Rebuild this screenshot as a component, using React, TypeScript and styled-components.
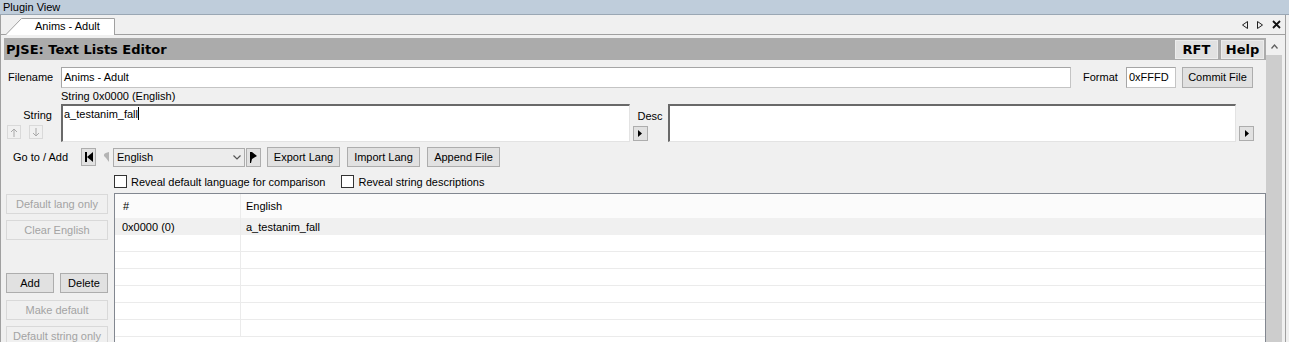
import React from 'react';
import styled, { createGlobalStyle } from 'styled-components';

const GlobalStyle = createGlobalStyle`
  html, body { margin: 0; padding: 0; background: #f0f0f0; }
  body {
    font-family: "Liberation Sans", Arial, sans-serif;
    font-size: 11px;
    color: #000;
    overflow: hidden;
  }
`;

const Frame = styled.div`
  width: 1289px;
  height: 342px;
  display: flex;
  flex-direction: column;
  overflow: hidden;
  background: #f0f0f0;
`;

const TitleBar = styled.div`
  flex-shrink: 0;
  height: 14px;
  line-height: 14px;
  padding-left: 3px;
  background: #bfcddb;
  border-bottom: 1px solid #9aa7b4;
`;

const Pane = styled.div`
  flex: 1;
  display: flex;
  flex-direction: column;
  margin-right: 3px;
  border-left: 1px solid #a0a0a0;
  border-right: 1px solid #a0a0a0;
  min-height: 0;
  overflow: hidden;
`;

const TabStrip = styled.div`
  flex-shrink: 0;
  height: 19px;
  display: flex;
  align-items: flex-end;
  padding-left: 4px;
  border-bottom: 1px solid #a0a0a0;
`;

const Tab = styled.div`
  position: relative;
  height: 17px;
  width: 110px;
  margin-bottom: -1px;
  box-sizing: border-box;
  padding-left: 30px;
  line-height: 17px;
  z-index: 1;
  span { position: relative; }
  svg { position: absolute; left: 0; top: 0; }
`;

const StripTools = styled.div`
  margin-left: auto;
  display: flex;
  align-items: center;
  gap: 9px;
  height: 19px;
  margin-right: 4px;
  align-self: flex-start;
`;

const Body = styled.div`
  flex: 1;
  display: flex;
  padding-left: 3px;
  min-height: 0;
  overflow: hidden;
`;

const Main = styled.div`
  flex: 1;
  display: flex;
  flex-direction: column;
  padding-top: 3px;
  min-width: 0;
`;

const HeaderBar = styled.div`
  flex-shrink: 0;
  height: 22px;
  display: flex;
  align-items: center;
  background: #ababab;
  padding: 0 2px;
`;

const HeaderTitle = styled.div`
  font-family: "DejaVu Sans", Verdana, sans-serif;
  font-weight: bold;
  font-size: 13px;
  flex: 1;
`;

const HeaderButton = styled.div`
  height: 19px;
  width: 43px;
  box-sizing: border-box;
  margin-left: 3px;
  background: #e1e1e1;
  border: 1px solid #ececec;
  display: flex;
  align-items: center;
  justify-content: center;
  font-family: "DejaVu Sans", Verdana, sans-serif;
  font-weight: bold;
  font-size: 13px;
`;

const ScrollCol = styled.div`
  width: 16px;
  flex-shrink: 0;
  margin-top: 3px;
  margin-right: 3px;
  display: flex;
  flex-direction: column;
`;

const ScrollArrow = styled.div`
  height: 17px;
  flex-shrink: 0;
  display: flex;
  align-items: center;
  justify-content: center;
`;

const ScrollTrack = styled.div`
  flex: 1;
  background: #cdcdcd;
`;

const Form = styled.div`
  display: flex;
  flex-direction: column;
  padding: 6px 0 0 2px;
  flex-shrink: 0;
`;

const Row = styled.div<{ $h: number; $mt?: number }>`
  flex-shrink: 0;
  display: flex;
  align-items: center;
  height: ${p => p.$h}px;
  margin-top: ${p => p.$mt ?? 0}px;
  margin-right: 12px;
`;

const LabelCol = styled.div<{ $w: number; $pl?: number }>`
  width: ${p => p.$w}px;
  padding-left: ${p => p.$pl ?? 0}px;
  box-sizing: border-box;
  flex-shrink: 0;
  white-space: nowrap;
`;

const TextInput = styled.div<{ $w?: number }>`
  box-sizing: border-box;
  height: 21px;
  ${p => (p.$w ? `width: ${p.$w}px; flex-shrink: 0;` : 'flex: 1;')}
  background: #fff;
  border: 1px solid #c4c4c4;
  border-top-color: #a5a5a5;
  border-left-color: #a5a5a5;
  padding: 0 2px;
  line-height: 19px;
  white-space: nowrap;
`;

const Button = styled.div<{ $w?: number; $h?: number; $off?: boolean }>`
  box-sizing: border-box;
  flex-shrink: 0;
  ${p => (p.$w ? `width: ${p.$w}px;` : '')}
  height: ${p => p.$h ?? 20}px;
  background: ${p => (p.$off ? '#f0f0f0' : '#e1e1e1')};
  border: 1px solid ${p => (p.$off ? '#d9d9d9' : '#adadad')};
  color: ${p => (p.$off ? '#a3a3a3' : '#000')};
  display: flex;
  align-items: center;
  justify-content: center;
  white-space: nowrap;
`;

const SubLabel = styled.div`
  flex-shrink: 0;
  height: 15px;
  line-height: 14px;
  padding-left: 55px;
  margin-top: 1px;
`;

const StringRow = styled.div`
  flex-shrink: 0;
  display: flex;
  height: 38px;
  margin-right: 12px;
`;

const StringLabelCol = styled.div`
  width: 55px;
  flex-shrink: 0;
  display: flex;
  flex-direction: column;
`;

const StringLabel = styled.div`
  text-align: right;
  padding-right: 9px;
  padding-top: 4px;
  line-height: 14px;
`;

const ArrowPair = styled.div`
  margin-top: auto;
  margin-bottom: 3px;
  display: flex;
  gap: 8px;
  padding-left: 1px;
`;

const TextBox = styled.div`
  flex: 1;
  box-sizing: border-box;
  background: #fff;
  border: 1px solid #e3e3e3;
  border-top: 2px solid #696969;
  border-left: 2px solid #696969;
  padding: 1px 1px;
  line-height: 14px;
`;

const Caret = styled.span`
  display: inline-block;
  width: 1px;
  height: 13px;
  background: #000;
  vertical-align: -2px;
`;

const DescCol = styled.div`
  width: 38px;
  flex-shrink: 0;
  display: flex;
  flex-direction: column;
  padding-left: 3px;
  box-sizing: border-box;
`;

const DescLabel = styled.div`
  padding-left: 5px;
  padding-top: 5px;
  line-height: 14px;
`;

const ExpandSlot = styled.div`
  margin-top: auto;
  margin-bottom: 1px;
`;

const ExpandCol = styled.div`
  width: 18px;
  flex-shrink: 0;
  display: flex;
  flex-direction: column;
  padding-left: 3px;
  box-sizing: border-box;
`;

const GotoLabel = styled.div`
  width: 75px;
  padding-left: 7px;
  box-sizing: border-box;
  flex-shrink: 0;
`;

const Select = styled.div`
  box-sizing: border-box;
  width: 132px;
  height: 19px;
  flex-shrink: 0;
  background: #ececec;
  border: 1px solid #acacac;
  display: flex;
  align-items: center;
  padding: 0 3px;
  justify-content: space-between;
`;

const CheckRow = styled.div`
  flex-shrink: 0;
  display: flex;
  align-items: center;
  height: 13px;
  margin-top: 8px;
  padding-left: 108px;
`;

const CheckBox = styled.span`
  width: 13px;
  height: 13px;
  box-sizing: border-box;
  border: 1px solid #333;
  background: #fff;
  margin-right: 4px;
  flex-shrink: 0;
`;

const CheckLabel = styled.span<{ $mr?: number }>`
  margin-right: ${p => p.$mr ?? 0}px;
`;

const Lower = styled.div`
  flex-shrink: 0;
  display: flex;
  margin-top: 5px;
  gap: 6px;
`;

const SideButtons = styled.div`
  width: 102px;
  flex-shrink: 0;
  display: flex;
  flex-direction: column;
  padding-top: 1px;
`;

const SidePair = styled.div`
  display: flex;
  justify-content: space-between;
`;

const Table = styled.div`
  flex: 1;
  background: #fff;
  border: 1px solid #828790;
  border-bottom: none;
  height: 200px;
`;

const TRow = styled.div<{ $head?: boolean; $sel?: boolean }>`
  display: grid;
  grid-template-columns: 126px 1fr;
  height: ${p => (p.$head ? 24 : p.$sel ? 17 : 16)}px;
  background: ${p => (p.$head ? '#fbfbfb' : p.$sel ? '#f0f0f0' : '#fff')};
  border-bottom: ${p => (p.$head || p.$sel ? 'none' : '1px solid #ebebeb')};
`;

const TCell = styled.div<{ $first?: boolean; $pl?: number }>`
  display: flex;
  align-items: center;
  padding-left: ${p => p.$pl ?? (p.$first ? 7 : 5)}px;
  border-right: ${p => (p.$first ? '1px solid #ebebeb' : 'none')};
  white-space: nowrap;
`;

const Tri = ({ dir, color = '#000', w = 4, h = 7 }: { dir: 'l' | 'r'; color?: string; w?: number; h?: number }) => (
  <svg width={w} height={h} viewBox={`0 0 ${w} ${h}`}>
    {dir === 'r' ? (
      <polygon points={`0,0 ${w},${h / 2} 0,${h}`} fill={color} />
    ) : (
      <polygon points={`${w},0 0,${h / 2} ${w},${h}`} fill={color} />
    )}
  </svg>
);

const Expand = () => (
  <Button $w={15} $h={15}>
    <Tri dir="r" />
  </Button>
);

const ArrowBtn = ({ up }: { up?: boolean }) => (
  <Button $w={14} $h={14} $off>
    <svg width="8" height="9" viewBox="0 0 8 9">
      {up ? (
        <path d="M4 1 V9 M1 4 L4 1 L7 4" stroke="#a8a8a8" strokeWidth="1" fill="none" />
      ) : (
        <path d="M4 0 V8 M1 5 L4 8 L7 5" stroke="#a8a8a8" strokeWidth="1" fill="none" />
      )}
    </svg>
  </Button>
);

const rows = Array.from({ length: 6 });

export default function App() {
  return (
    <Frame>
      <GlobalStyle />
      <TitleBar>Plugin View</TitleBar>
      <Pane>
        <TabStrip>
          <Tab>
            <svg width="110" height="17" viewBox="0 0 110 17">
              <path d="M0.5 17 L16.5 0.5 L109.5 0.5 L109.5 17" fill="#fff" stroke="#a0a0a0" />
            </svg>
            <span>Anims - Adult</span>
          </Tab>
          <StripTools>
            <svg width="6" height="8" viewBox="0 0 6 8">
              <polygon points="5.5,0.5 0.5,4 5.5,7.5" fill="none" stroke="#222" />
            </svg>
            <svg width="6" height="8" viewBox="0 0 6 8">
              <polygon points="0.5,0.5 5.5,4 0.5,7.5" fill="none" stroke="#222" />
            </svg>
            <svg width="9" height="9" viewBox="0 0 9 9">
              <path d="M1 1 L8 8 M8 1 L1 8" stroke="#111" strokeWidth="1.8" />
            </svg>
          </StripTools>
        </TabStrip>
        <Body>
          <Main>
            <HeaderBar>
              <HeaderTitle>PJSE: Text Lists Editor</HeaderTitle>
              <HeaderButton>RFT</HeaderButton>
              <HeaderButton>Help</HeaderButton>
            </HeaderBar>
            <Form>
              <Row $h={22}>
                <LabelCol $w={55} $pl={2}>Filename</LabelCol>
                <TextInput>Anims - Adult</TextInput>
                <LabelCol $w={55} $pl={12}>Format</LabelCol>
                <TextInput $w={50}>0xFFFD</TextInput>
                <Button $w={71} $h={21} style={{ marginLeft: 6, marginRight: 1 }}>Commit File</Button>
              </Row>
              <SubLabel>String 0x0000 (English)</SubLabel>
              <StringRow>
                <StringLabelCol>
                  <StringLabel>String</StringLabel>
                  <ArrowPair>
                    <ArrowBtn up />
                    <ArrowBtn />
                  </ArrowPair>
                </StringLabelCol>
                <TextBox>
                  a_testanim_fall<Caret />
                </TextBox>
                <DescCol>
                  <DescLabel>Desc</DescLabel>
                  <ExpandSlot>
                    <Expand />
                  </ExpandSlot>
                </DescCol>
                <TextBox />
                <ExpandCol>
                  <ExpandSlot>
                    <Expand />
                  </ExpandSlot>
                </ExpandCol>
              </StringRow>
              <Row $h={20} $mt={5}>
                <GotoLabel>Go to / Add</GotoLabel>
                <Button $w={15} $h={18}>
                  <svg width="8" height="10" viewBox="0 0 8 10">
                    <rect x="0" y="0" width="2" height="10" fill="#000" />
                    <polygon points="8,0 2,5 8,10" fill="#000" />
                  </svg>
                </Button>
                <Button $w={15} $h={18} $off style={{ marginLeft: 2, border: 'none' }}>
                  <svg width="6" height="10" viewBox="0 0 6 10">
                    <path d="M6 0 L6 10 L3 6 L1 4 Q0 1 6 0 Z" fill="#b4b4b4" />
                  </svg>
                </Button>
                <Select>
                  <span>English</span>
                  <svg width="8" height="5" viewBox="0 0 8 5">
                    <path d="M0.5 0.5 L4 4 L7.5 0.5" fill="none" stroke="#555" strokeWidth="1.2" />
                  </svg>
                </Select>
                <Button $w={15} $h={19} style={{ marginLeft: 1 }}>
                  <svg width="7" height="11" viewBox="0 0 7 11">
                    <polygon points="0,0 2,0 7,4 2,7 1,11 0,11" fill="#000" />
                  </svg>
                </Button>
                <Button $w={73} $h={20} style={{ marginLeft: 6 }}>Export Lang</Button>
                <Button $w={73} $h={20} style={{ marginLeft: 7 }}>Import Lang</Button>
                <Button $w={73} $h={20} style={{ marginLeft: 7 }}>Append File</Button>
              </Row>
              <CheckRow>
                <CheckBox />
                <CheckLabel $mr={16}>Reveal default language for comparison</CheckLabel>
                <CheckBox />
                <CheckLabel>Reveal string descriptions</CheckLabel>
              </CheckRow>
              <Lower>
                <SideButtons>
                  <Button $off>Default lang only</Button>
                  <Button $off style={{ marginTop: 6 }}>Clear English</Button>
                  <SidePair style={{ marginTop: 33 }}>
                    <Button $w={48} $h={20}>Add</Button>
                    <Button $w={48} $h={20}>Delete</Button>
                  </SidePair>
                  <Button $off style={{ marginTop: 7 }}>Make default</Button>
                  <Button $off style={{ marginTop: 6 }}>Default string only</Button>
                </SideButtons>
                <Table>
                  <TRow $head>
                    <TCell $first $pl={8}>#</TCell>
                    <TCell>English</TCell>
                  </TRow>
                  <TRow $sel>
                    <TCell $first>0x0000 (0)</TCell>
                    <TCell>a_testanim_fall</TCell>
                  </TRow>
                  {rows.map((_, i) => (
                    <TRow key={i}>
                      <TCell $first />
                      <TCell />
                    </TRow>
                  ))}
                </Table>
              </Lower>
            </Form>
          </Main>
          <ScrollCol>
            <ScrollArrow>
              <svg width="7" height="5" viewBox="0 0 7 5">
                <path d="M0.5 4.5 L3.5 1 L6.5 4.5" fill="none" stroke="#606060" strokeWidth="1.3" />
              </svg>
            </ScrollArrow>
            <ScrollTrack />
          </ScrollCol>
        </Body>
      </Pane>
    </Frame>
  );
}
